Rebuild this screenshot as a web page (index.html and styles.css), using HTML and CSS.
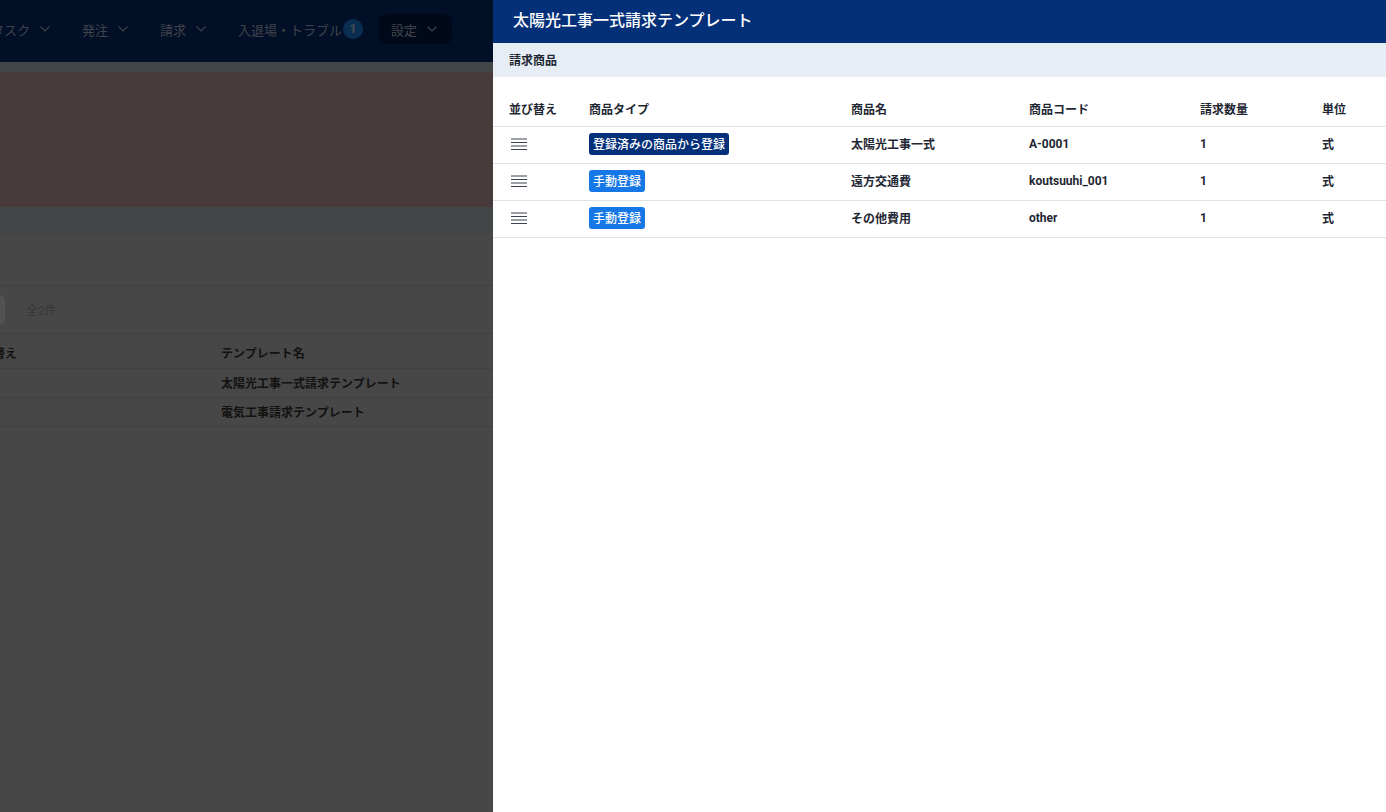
FILE: index.html
```html
<!DOCTYPE html>
<html lang="ja">
<head>
<meta charset="utf-8">
<title>請求テンプレート</title>
<link rel="stylesheet" href="styles.css">
</head>
<body>
<div class="page">
  <header class="topbar">
    <nav class="nav">
      <a class="nav-item">タスク<svg class="chev" viewBox="0 0 10 6"><path d="M0.5 0.5 L5 5 L9.5 0.5"/></svg></a>
      <a class="nav-item">発注<svg class="chev" viewBox="0 0 10 6"><path d="M0.5 0.5 L5 5 L9.5 0.5"/></svg></a>
      <a class="nav-item">請求<svg class="chev" viewBox="0 0 10 6"><path d="M0.5 0.5 L5 5 L9.5 0.5"/></svg></a>
      <a class="nav-item has-badge">入退場・トラブル<span class="badge">1</span></a>
      <a class="nav-item active">設定<svg class="chev" viewBox="0 0 10 6"><path d="M0.5 0.5 L5 5 L9.5 0.5"/></svg></a>
    </nav>
  </header>
  <div class="page-body">
    <div class="alert"></div>
    <section class="card">
      <div class="card-head"></div>
      <div class="toolbar">
        <button class="tool-btn" type="button"></button>
        <span class="count">全2件</span>
      </div>
      <table class="list">
        <colgroup><col class="c-sort"><col></colgroup>
        <thead><tr><th>並び替え</th><th>テンプレート名</th></tr></thead>
        <tbody>
          <tr><td></td><td>太陽光工事一式請求テンプレート</td></tr>
          <tr><td></td><td>電気工事請求テンプレート</td></tr>
        </tbody>
      </table>
    </section>
  </div>
</div>
<div class="mask"></div>
<aside class="drawer">
  <div class="drawer-head">太陽光工事一式請求テンプレート</div>
  <div class="section-bar">請求商品</div>
  <table class="items">
    <colgroup>
      <col class="w-sort"><col class="w-type"><col class="w-name"><col class="w-code"><col class="w-qty"><col>
    </colgroup>
    <thead>
      <tr><th>並び替え</th><th>商品タイプ</th><th>商品名</th><th>商品コード</th><th>請求数量</th><th>単位</th></tr>
    </thead>
    <tbody>
      <tr>
        <td><svg class="grip" viewBox="0 0 16 12"><path d="M0 1h16M0 4.5h16M0 8h16M0 11.5h16"/></svg></td>
        <td><span class="tag tag-reg">登録済みの商品から登録</span></td>
        <td>太陽光工事一式</td><td>A-0001</td><td>1</td><td>式</td>
      </tr>
      <tr>
        <td><svg class="grip" viewBox="0 0 16 12"><path d="M0 1h16M0 4.5h16M0 8h16M0 11.5h16"/></svg></td>
        <td><span class="tag tag-manual">手動登録</span></td>
        <td>遠方交通費</td><td>koutsuuhi_001</td><td>1</td><td>式</td>
      </tr>
      <tr>
        <td><svg class="grip" viewBox="0 0 16 12"><path d="M0 1h16M0 4.5h16M0 8h16M0 11.5h16"/></svg></td>
        <td><span class="tag tag-manual">手動登録</span></td>
        <td>その他費用</td><td>other</td><td>1</td><td>式</td>
      </tr>
    </tbody>
  </table>
</aside>
</body>
</html>
```

FILE: styles.css
```css
* { box-sizing: border-box; }
html, body {
  margin: 0;
  height: 100%;
  overflow: hidden;
}
body {
  font-family: "Roboto", "Noto Sans CJK JP", sans-serif;
  background: #d1d8de;
  color: #333;
}

/* ---------- background page ---------- */
.page {
  margin-left: -48px;
  width: calc(100% + 48px);
}
.topbar {
  height: 62px;
  background: #042f79;
  display: flex;
  align-items: center;
  padding: 0 0 4px 26px;
}
.nav {
  display: flex;
  align-items: center;
  gap: 6px;
}
.nav-item {
  display: flex;
  align-items: center;
  height: 30px;
  padding: 0 13px;
  border-radius: 8px;
  font-size: 13px;
  color: #c3cde0;
  white-space: nowrap;
}
.nav-item.has-badge { padding-right: 9px; }
.nav-item.active {
  background: rgba(0, 0, 0, 0.35);
  padding-right: 15px;
}
.chev {
  width: 10px;
  height: 6px;
  margin-left: 10px;
  fill: none;
  stroke: currentColor;
  stroke-width: 1.1;
}
.badge {
  width: 20px;
  height: 20px;
  margin-left: 1px;
  border-radius: 50%;
  background: #1f8fff;
  color: #dbe6f5;
  font-size: 12px;
  font-weight: 700;
  display: flex;
  align-items: center;
  justify-content: center;
}
.page-body {
  padding-top: 10px;
}
.alert {
  height: 135px;
  background: #deb8b8;
}
.card {
  margin-top: 27px;
  background: #dedede;
  min-height: 600px;
}
.card-head {
  height: 52px;
  border-bottom: 1px solid #c8c8c8;
}
.toolbar {
  height: 48px;
  display: flex;
  align-items: center;
  border-bottom: 1px solid #c8c8c8;
}
.tool-btn {
  width: 36px;
  height: 30px;
  margin-left: 17px;
  border: none;
  border-radius: 6px;
  background: #ffffff;
}
.count {
  margin-left: 21px;
  font-size: 12px;
  color: #a8a8a8;
}
.list {
  width: 100%;
  border-collapse: collapse;
  font-size: 12px;
}
.list .c-sort { width: 269px; }
.list th, .list td {
  text-align: left;
  padding: 0 0 0 17px;
  border-bottom: 1px solid #c8c8c8;
  color: #3a3a3a;
  font-weight: 700;
}
.list td + td, .list th + th { padding-left: 0; }
.list th { height: 34px; padding-top: 4px; }
.list td { height: 29px; }

/* ---------- overlay ---------- */
.mask {
  position: fixed;
  inset: 0;
  background: rgba(0, 0, 0, 0.68);
}

/* ---------- drawer ---------- */
.drawer {
  position: fixed;
  top: 0;
  right: 0;
  bottom: 0;
  width: 893px;
  background: #ffffff;
}
.drawer-head {
  height: 43px;
  background: #042f79;
  color: #ffffff;
  font-size: 16px;
  font-weight: 500;
  display: flex;
  align-items: center;
  padding: 0 20px 5px;
}
.section-bar {
  height: 34px;
  background: #e6edf5;
  display: flex;
  align-items: center;
  padding: 0 16px 2px;
  font-size: 12px;
  font-weight: 700;
  color: #1f2733;
}
.items {
  width: 100%;
  margin-top: 14px;
  border-collapse: collapse;
  table-layout: fixed;
  font-size: 12px;
}
.w-sort { width: 96px; }
.w-type { width: 262px; }
.w-name { width: 178px; }
.w-code { width: 171px; }
.w-qty { width: 122px; }
.items th, .items td {
  text-align: left;
  padding: 0;
  border-bottom: 1px solid #dde2e9;
  color: #1f2733;
  font-weight: 700;
  white-space: nowrap;
}
.items th:first-child, .items td:first-child { padding-left: 16px; }
.items th { height: 35px; }
.items td { height: 37px; padding-bottom: 2px; }
.grip {
  display: block;
  width: 16px;
  height: 12px;
  margin-left: 2px;
  fill: none;
  stroke: #3d4352;
  stroke-width: 1.1;
}
.tag {
  display: inline-flex;
  align-items: center;
  height: 22px;
  padding: 0 4px;
  border-radius: 3px;
  color: #ffffff;
  font-size: 12px;
  font-weight: 500;
}
.tag-reg { background: #042f79; }
.tag-manual { background: #1677e6; }
```
